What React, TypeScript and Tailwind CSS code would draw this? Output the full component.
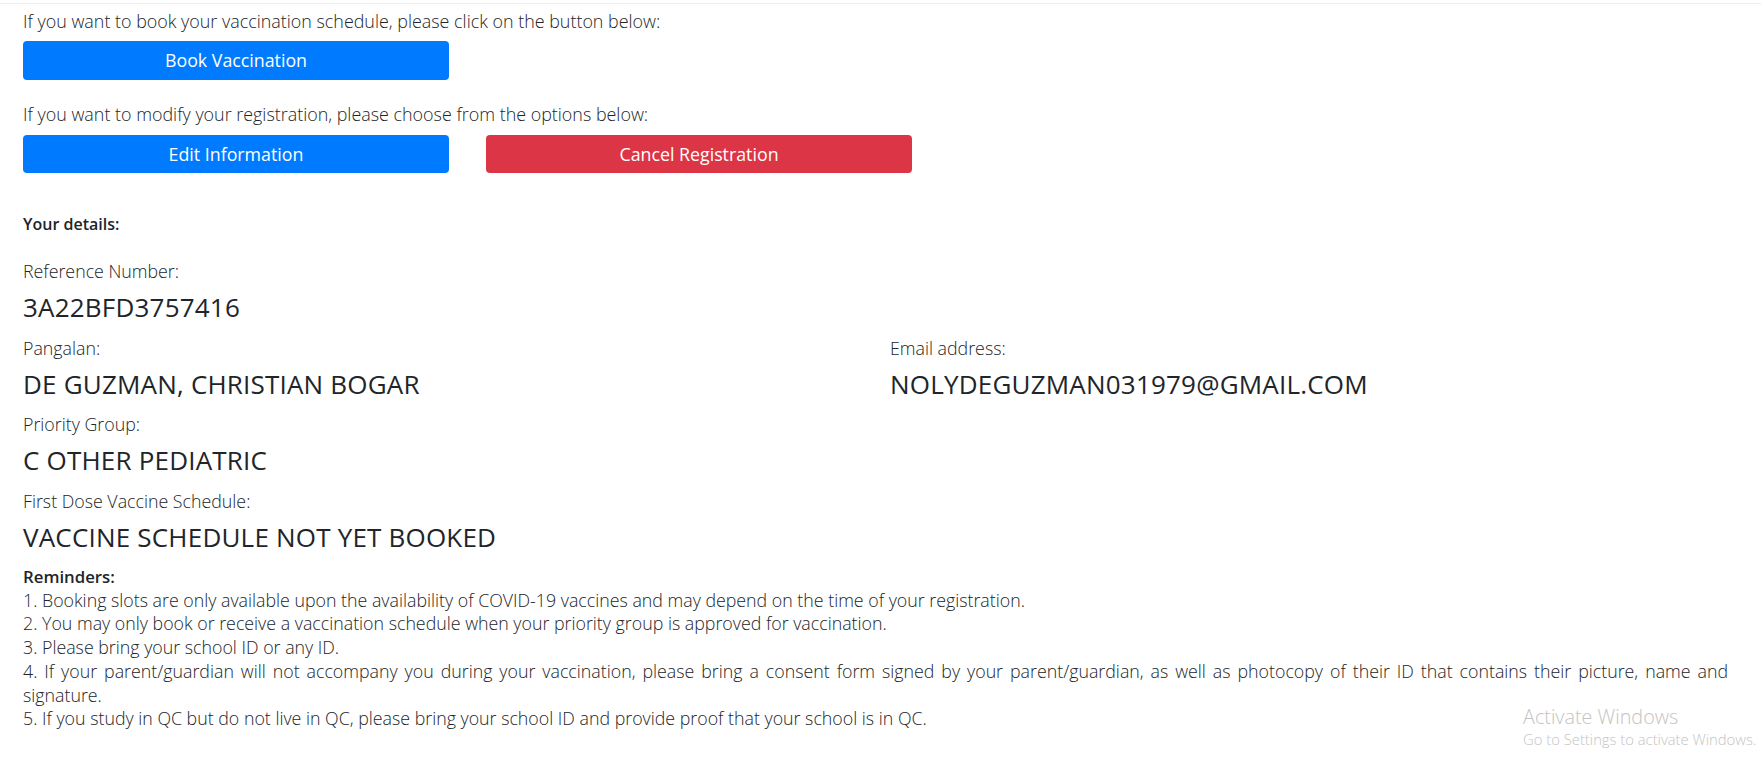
import React from 'react';

const font = { fontFamily: '"Open Sans", Lato, sans-serif' };

function Field({ label, value }: { label: string; value: string }) {
  return (
    <div className="mb-[16.5px]">
      <div className="text-[17.8px] leading-6 font-light text-[#212529]">{label}</div>
      <div className="mt-3 text-[26px] leading-6 font-medium tracking-[0.2px] text-[#212529]">{value}</div>
    </div>
  );
}

export default function App() {
  const reminders = [
    '1. Booking slots are only available upon the availability of COVID-19 vaccines and may depend on the time of your registration.',
    '2. You may only book or receive a vaccination schedule when your priority group is approved for vaccination.',
    '3. Please bring your school ID or any ID.',
    '4. If your parent/guardian will not accompany you during your vaccination, please bring a consent form signed by your parent/guardian, as well as photocopy of their ID that contains their picture, name and signature.',
    '5. If you study in QC but do not live in QC, please bring your school ID and provide proof that your school is in QC.',
  ];

  return (
    <div className="relative min-h-[783px] w-full bg-white text-[#212529]" style={font}>
      <div className="h-[3px]" />
      <div className="border-t border-[#ececec]" />

      <div className="px-[23px] pt-[5px]">
        <p className="text-[17.9px] leading-6 font-light">
          If you want to book your vaccination schedule, please click on the button below:
        </p>
        <button className="mt-2 flex h-[39px] w-[426px] items-center justify-center rounded bg-[#007bff] text-[17.8px] font-normal text-white">
          Book Vaccination
        </button>

        <p className="mt-[22px] text-[17.9px] leading-6 font-light">
          If you want to modify your registration, please choose from the options below:
        </p>
        <div className="mt-[9px] flex gap-[37px]">
          <button className="flex h-[38px] w-[426px] items-center justify-center rounded bg-[#007bff] text-[17.8px] font-normal text-white">
            Edit Information
          </button>
          <button className="flex h-[38px] w-[426px] items-center justify-center rounded bg-[#dc3545] text-[17.8px] font-normal text-white">
            Cancel Registration
          </button>
        </div>

        <div className="mt-[39px] text-[16px] leading-6 font-semibold">Your details:</div>

        <div className="mt-[23px]">
          <Field label="Reference Number:" value="3A22BFD3757416" />
          <div className="grid grid-cols-[867px_1fr]">
            <Field label="Pangalan:" value="DE GUZMAN, CHRISTIAN BOGAR" />
            <Field label="Email address:" value="NOLYDEGUZMAN031979@GMAIL.COM" />
          </div>
          <Field label="Priority Group:" value="C OTHER PEDIATRIC" />
          <Field label="First Dose Vaccine Schedule:" value="VACCINE SCHEDULE NOT YET BOOKED" />
        </div>

        <div className="mr-[10px] text-justify text-[17.8px] leading-[23.7px] font-light">
          <div className="font-semibold text-[16.8px]">Reminders:</div>
          {reminders.map((r) => (
            <div key={r}>{r}</div>
          ))}
        </div>
      </div>

      <div
        className="absolute left-[1523px] top-[704px] text-[#c4c4c4]"
        style={{ fontFamily: '"Open Sans", "Liberation Sans", sans-serif' }}
      >
        <div className="text-[19.8px] leading-[26px] font-light">Activate Windows</div>
        <div className="text-[14.8px] leading-[18px] font-light">Go to Settings to activate Windows.</div>
      </div>
    </div>
  );
}
